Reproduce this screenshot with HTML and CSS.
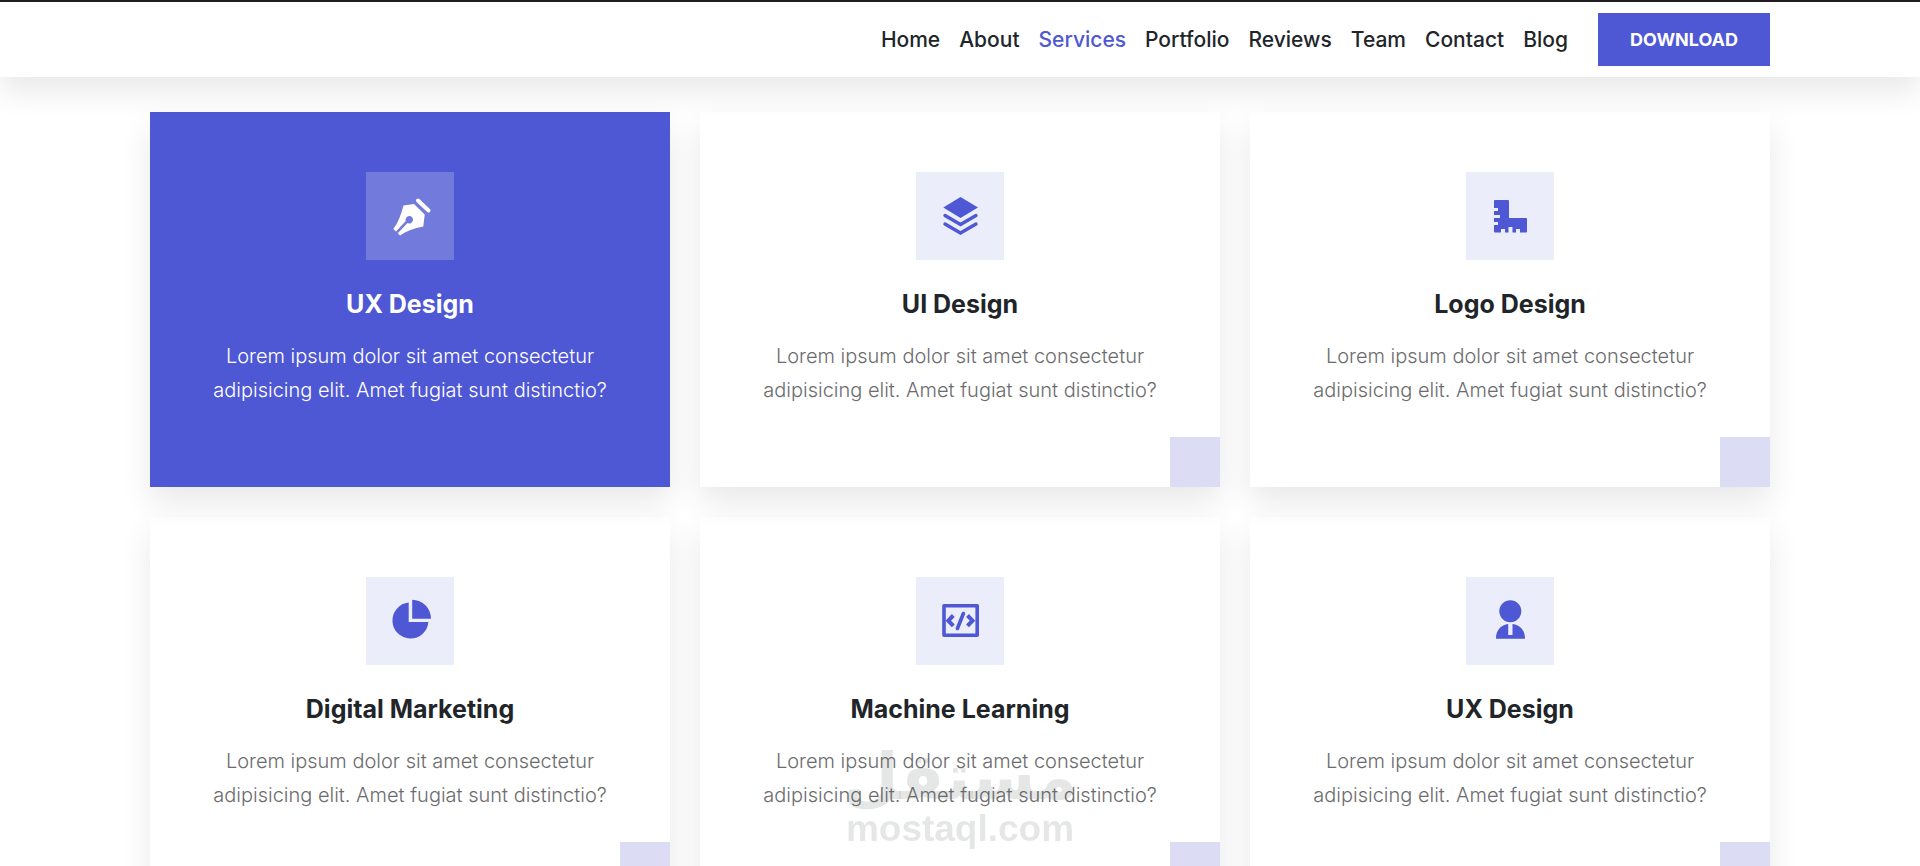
FILE: index.html
```html
<!DOCTYPE html>
<html lang="en">
<head>
<meta charset="utf-8">
<title>Services</title>
<meta name="viewport" content="width=device-width, initial-scale=1">
<link rel="stylesheet" href="styles.css">
</head>
<body>
<header class="header">
  <div class="container header-inner">
    <nav class="nav">
      <a href="#home">Home</a>
      <a href="#about">About</a>
      <a href="#services" class="active">Services</a>
      <a href="#portfolio">Portfolio</a>
      <a href="#reviews">Reviews</a>
      <a href="#team">Team</a>
      <a href="#contact">Contact</a>
      <a href="#blog">Blog</a>
    </nav>
    <button type="button" class="download">DOWNLOAD</button>
  </div>
</header>
<main class="container services" id="services">
  <article class="card card-active">
    <svg class="icon" viewBox="0 0 88 88" aria-hidden="true">
      <path d="M52 28.500L62.500 38.500" fill="none" stroke="currentColor" stroke-width="4" stroke-linecap="round"/>
      <path d="M37.500 33.500L48 32L58.700 42.500L57.300 54.500C48 56 40 59 34 63.500L31.800 61.300L41.500 51A3.700 3.700 0 1 0 39.800 49L30 59.500L27.300 57C32 51 35 43 37.500 33.500Z" fill="currentColor"/>
    </svg>
    <h3>UX Design</h3>
    <p>Lorem ipsum dolor sit amet consectetur adipisicing elit. Amet fugiat sunt distinctio?</p>
  </article>
  <article class="card">
    <svg class="icon" viewBox="0 0 88 88" aria-hidden="true">
      <path d="M44.500 25L62 35.500L44.500 46L27.300 35.500Z" fill="currentColor"/>
      <path d="M29 43.500L44.500 52.500L60 43.500M29 52L44.500 61L60 52" fill="none" stroke="currentColor" stroke-width="3.400" stroke-linecap="round"/>
    </svg>
    <h3>UI Design</h3>
    <p>Lorem ipsum dolor sit amet consectetur adipisicing elit. Amet fugiat sunt distinctio?</p>
  </article>
  <article class="card">
    <svg class="icon" viewBox="0 0 88 88" aria-hidden="true">
      <path d="M29 28H42Q43 28 43 29V46H60Q61 46 61 47V59.500Q61 60.500 60 60.500H54V57H50V60.500H46.500V55H42.500V60.500H39V57H35V60.500H29Q28 60.500 28 59.500V53H32V50H28V46H34V43H28V39H32V36H28V29Q28 28 29 28Z" fill="currentColor"/>
    </svg>
    <h3>Logo Design</h3>
    <p>Lorem ipsum dolor sit amet consectetur adipisicing elit. Amet fugiat sunt distinctio?</p>
  </article>
  <article class="card">
    <svg class="icon" viewBox="0 0 88 88" aria-hidden="true">
      <path d="M42.700 25.600A18 18 0 1 0 62.400 45H42.700ZM46.200 22.700A19 19 0 0 1 65 41.700H46.200Z" fill="currentColor"/>
    </svg>
    <h3>Digital Marketing</h3>
    <p>Lorem ipsum dolor sit amet consectetur adipisicing elit. Amet fugiat sunt distinctio?</p>
  </article>
  <article class="card">
    <svg class="icon" viewBox="0 0 88 88" aria-hidden="true">
      <rect x="28" y="28.800" width="33.200" height="29.500" fill="none" stroke="currentColor" stroke-width="3.600" stroke-linejoin="round"/>
      <path d="M37.300 38.500L32.300 43.700L37.300 48.800M51.500 38.500L56.500 43.700L51.500 48.800" fill="none" stroke="currentColor" stroke-width="4"/>
      <path d="M47.400 36.500L41.400 51.500" fill="none" stroke="currentColor" stroke-width="3.600" stroke-linecap="round"/>
    </svg>
    <h3>Machine Learning</h3>
    <p>Lorem ipsum dolor sit amet consectetur adipisicing elit. Amet fugiat sunt distinctio?</p>
  </article>
  <article class="card">
    <svg class="icon" viewBox="0 0 88 88" aria-hidden="true">
      <circle cx="44.300" cy="34.300" r="11" fill="currentColor"/>
      <path d="M30 61.700C30 53 35 48 42.200 47V58H46.500V47C54 48 59 53 59 61.700Z" fill="currentColor"/>
    </svg>
    <h3>UX Design</h3>
    <p>Lorem ipsum dolor sit amet consectetur adipisicing elit. Amet fugiat sunt distinctio?</p>
  </article>
</main>
<div class="watermark">
  <span class="watermark-ar" lang="ar" dir="rtl">مستقل</span>
  <span class="watermark-en">mostaql.com</span>
</div>
</body>
</html>
```

FILE: styles.css
```css
* {
  box-sizing: border-box;
}

body {
  margin: 0;
  height: 100vh;
  overflow: hidden;
  background: #fff;
  color: #212529;
  font-family: Inter, "Liberation Sans", sans-serif;
}

.container {
  width: 100%;
  max-width: 1680px;
  margin: 0 auto;
  padding: 0 30px;
}

.header {
  position: relative;
  z-index: 2;
  border-top: 2px solid #201c22;
  background: #fff;
  box-shadow: 0 15px 30px rgba(0, 0, 0, 0.09);
}

.header-inner {
  display: flex;
  justify-content: flex-end;
  align-items: center;
  gap: 30px;
  padding-top: 11px;
  padding-bottom: 11px;
}

.nav {
  display: flex;
  gap: 19px;
}

.nav a {
  color: #212529;
  font-size: 21px;
  font-weight: 500;
  line-height: 28px;
  text-decoration: none;
}

.nav .active {
  color: #4e57d4;
}

.download {
  padding: 0 32px;
  border: 0;
  background: #4e57d4;
  color: #fff;
  font: 700 18px/53px Inter, "Liberation Sans", sans-serif;
}

.services {
  display: grid;
  grid-template-columns: repeat(3, 1fr);
  gap: 30px;
  padding-top: 35px;
}

.card {
  position: relative;
  padding: 60px 50px 80px;
  text-align: center;
  box-shadow: 0 15px 30px rgba(0, 0, 0, 0.09);
}

.card::after {
  content: "";
  position: absolute;
  right: 0;
  bottom: 0;
  width: 50px;
  height: 50px;
  background: #dcddf5;
}

.icon {
  display: block;
  width: 88px;
  height: 88px;
  margin: 0 auto 29px;
  background: #ebedfa;
  color: #4e57d4;
}

.card h3 {
  margin: 0 0 20px;
  font-size: 25px;
  font-weight: 700;
  line-height: 30px;
}

.card p {
  margin: 0;
  color: #6c6c6e;
  font-size: 20px;
  font-weight: 300;
  line-height: 34px;
}

.card-active {
  background: #4e57d4;
  color: #fff;
}

.card-active::after {
  display: none;
}

.card-active .icon {
  background: #727adc;
  color: #fff;
}

.card-active p {
  color: #fff;
}

.watermark {
  position: fixed;
  left: 0;
  right: 0;
  bottom: 17px;
  z-index: 3;
  display: flex;
  flex-direction: column;
  align-items: center;
  color: rgba(80, 95, 90, 0.15);
  font-weight: 700;
  pointer-events: none;
}

.watermark-ar {
  font-family: "DejaVu Sans", sans-serif;
  font-size: 64px;
  line-height: 64px;
}

.watermark-en {
  font-family: "Liberation Sans", sans-serif;
  font-size: 37px;
  line-height: 40px;
}
```
